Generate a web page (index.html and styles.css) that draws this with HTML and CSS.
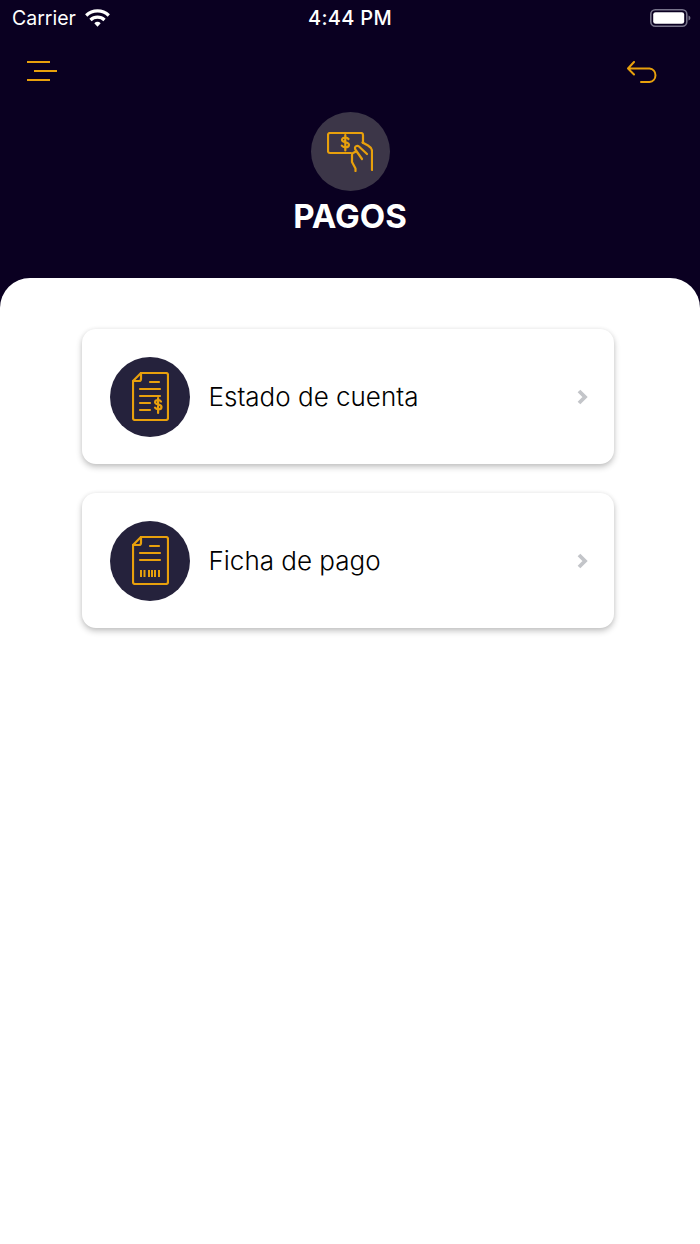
FILE: index.html
```html
<!DOCTYPE html>
<html lang="es">

<head>
    <meta charset="UTF-8">
    <meta name="viewport" content="width=device-width, initial-scale=1.0">
    <title>Pagos</title>
    <link rel="stylesheet" href="styles.css">
</head>

<body>
    <header class="header">
        <div class="status-bar">
            <div class="status-left">
                <span>Carrier</span>
                <svg width="25" height="19" viewBox="0 0 25 19" fill="none" stroke="#fff" stroke-width="3.200">
                    <path d="M1.200 6.500a16.300 16.300 0 0 1 22.600 0" />
                    <path d="M5.500 11a10 10 0 0 1 14 0" />
                    <path d="M9.300 14.200a5 5 0 0 1 6.400 0L12.500 17.800z" fill="#fff" stroke="none" />
                </svg>
            </div>
            <span class="status-time">4:44 PM</span>
            <div class="status-right">
                <svg width="42" height="20" viewBox="0 0 42 20">
                    <rect x="0.800" y="1.800" width="36" height="16.400" rx="4.500" fill="none" stroke="#77738a" stroke-width="1.600" />
                    <rect x="3.200" y="4.200" width="31" height="11.600" rx="2.400" fill="#fff" />
                    <path d="M38.500 7.500c1.300.4 1.900 1.300 1.900 2.500s-.6 2.100-1.900 2.500z" fill="#77738a" />
                </svg>
            </div>
        </div>

        <div class="nav-row">
            <svg width="30" height="20" viewBox="0 0 30 20" fill="none" stroke="#e8a00c" stroke-width="2">
                <path d="M0 1h23M7 10h23M0 19h23" />
            </svg>
            <svg width="30" height="22" viewBox="0 0 30 22" fill="none" stroke="#e8a00c" stroke-width="2"
                stroke-linecap="round" stroke-linejoin="round">
                <path d="M7 1 1 7.500l6 6M1 7.500h21.500a6.800 6.800 0 0 1 0 13.500H14" />
            </svg>
        </div>

        <div class="page-title">
            <div class="title-icon">
                <svg width="46" height="40" viewBox="0 0 46 40" fill="none" stroke="#e8a00c" stroke-width="2.200"
                    stroke-linecap="round" stroke-linejoin="round">
                    <path d="M24 21H3a2 2 0 0 1-2-2V3a2 2 0 0 1 2-2h31a2 2 0 0 1 2 2v8" />
                    <path d="M21.500 7c-.7-1-1.800-1.500-3.200-1.500-1.900 0-3.300.9-3.300 2.300 0 3.300 7 1.700 7 5 0 1.500-1.500 2.500-3.500 2.500-1.500 0-2.900-.6-3.700-1.700M18.300 3v15.500" />
                    <path d="M45 38V19c0-3-1.500-4-4-5.500l-5.500-3" />
                    <path d="M40 22l-8-7.500c-1.500-1.300-3.500-.5-4 1-.3 1 .2 2 1 3l6 8.500" />
                    <path d="M29 19.500l-3 1.500c-.8.4-1 1-1 2v7l3.500 6.500V39" />
                </svg>
            </div>
            <h1>PAGOS</h1>
        </div>
    </header>

    <main class="sheet">
        <a class="menu-card">
            <div class="card-icon">
                <svg width="37" height="49" viewBox="0 0 37 49" fill="none" stroke="#e8a00c" stroke-width="2.200"
                    stroke-linecap="round" stroke-linejoin="round">
                    <path d="M9 1h25a2 2 0 0 1 2 2v43a2 2 0 0 1-2 2H3a2 2 0 0 1-2-2V9z" />
                    <path d="M9 1v6a2 2 0 0 1-2 2H1" />
                    <path d="M18 10h9M8 17h20M8 24h20M8 31h10M8 38h10" />
                    <path d="M29 29.500c-.6-1-1.600-1.500-2.900-1.500-1.700 0-3 .9-3 2.200 0 3.100 6.400 1.600 6.400 4.700 0 1.400-1.400 2.400-3.200 2.400-1.400 0-2.600-.6-3.300-1.600M26.100 26v15" />
                </svg>
            </div>
            <span class="card-label">Estado de cuenta</span>
            <svg width="11" height="16" viewBox="0 0 11 16" fill="none" stroke="#c3c5c9" stroke-width="3.800">
                <path d="M2 2l6 6-6 6" />
            </svg>
        </a>

        <a class="menu-card">
            <div class="card-icon">
                <svg width="37" height="49" viewBox="0 0 37 49" fill="none" stroke="#e8a00c" stroke-width="2.200"
                    stroke-linecap="round" stroke-linejoin="round">
                    <path d="M9 1h25a2 2 0 0 1 2 2v43a2 2 0 0 1-2 2H3a2 2 0 0 1-2-2V9z" />
                    <path d="M9 1v6a2 2 0 0 1-2 2H1" />
                    <path d="M18 10h9M8 17h20M8 24h20" />
                    <path stroke-linecap="butt" stroke-width="2" d="M9 34v7M12.500 34v7M17 34v7M20 34v7M23 34v7M27 34v7" />
                </svg>
            </div>
            <span class="card-label">Ficha de pago</span>
            <svg width="11" height="16" viewBox="0 0 11 16" fill="none" stroke="#c3c5c9" stroke-width="3.800">
                <path d="M2 2l6 6-6 6" />
            </svg>
        </a>
    </main>
</body>

</html>
```

FILE: styles.css
```css
body {
    font-family: Inter, "Liberation Sans", sans-serif;
    background-color: #fff;
    margin: 0;
    height: 1244px;
    overflow: hidden;
}

/* runs 30px under the sheet so the dark shows in its round corners */
.header {
    background-color: #0a0021;
    height: 308px;
    color: #fff;
}

.status-bar {
    height: 36px;
    padding: 0 8px;
    display: grid;
    grid-template-columns: 1fr auto 1fr;
    align-items: center;
    font-size: 19.5px;
}

.status-left {
    display: flex;
    align-items: center;
    gap: 9px;
    padding-left: 4px;
}

.status-time {
    font-size: 20px;
    font-weight: 500;
    letter-spacing: 0.3px;
}

.status-right {
    display: flex;
    justify-content: flex-end;
}

.nav-row {
    display: flex;
    justify-content: space-between;
    align-items: flex-start;
    padding: 25px 43px 0 27px;
    height: 51px;
}

.page-title {
    display: flex;
    flex-direction: column;
    align-items: center;
}

.title-icon {
    width: 79px;
    height: 79px;
    border-radius: 50%;
    background-color: #3c3648;
    display: flex;
    align-items: center;
    justify-content: center;
}

.page-title h1 {
    margin: 5px 0 0;
    font-size: 33px;
    line-height: 40px;
    font-weight: 700;
}

.sheet {
    background-color: #fff;
    margin-top: -30px;
    border-radius: 30px 30px 0 0;
    padding: 51px 86px 0 82px;
    display: flex;
    flex-direction: column;
    gap: 29px;
    position: relative;
}

.menu-card {
    height: 135px;
    border-radius: 14px;
    background-color: #fff;
    box-shadow: 0 3px 6px rgba(0, 0, 0, 0.24), 0 0 4px rgba(0, 0, 0, 0.05);
    display: flex;
    align-items: center;
    padding: 0 26px 0 28px;
}

.card-icon {
    width: 80px;
    height: 80px;
    border-radius: 50%;
    background-color: #25223c;
    display: flex;
    align-items: center;
    justify-content: center;
    flex-shrink: 0;
}

.card-label {
    flex: 1;
    margin-left: 18.5px;
    font-size: 26px;
    font-weight: 300;
    color: #000;
}
```
